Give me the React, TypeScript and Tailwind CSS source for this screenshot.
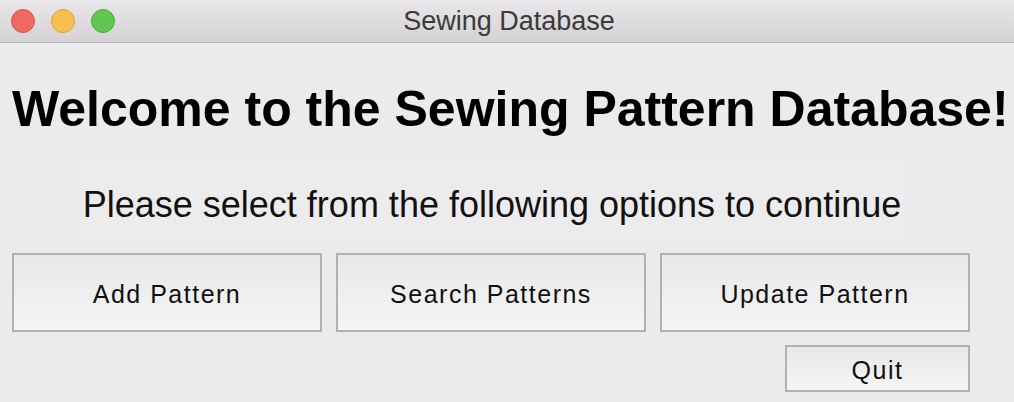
export default function App() {
  const btn =
    'flex items-center justify-center pt-[5px] border-2 border-[#b1b1b1] bg-gradient-to-b from-[#e8e8e8] to-[#f5f5f5] text-[25px] tracking-[1.5px] text-[#111]'

  return (
    <div className="w-[1014px] h-[402px] bg-[#ebebeb] flex flex-col overflow-hidden font-['Liberation_Sans',Arial,sans-serif]">
      {/* title bar */}
      <div className="relative h-[43px] shrink-0 bg-gradient-to-b from-[#e9e7e9] to-[#d4d2d4] border-b border-[#b9b9b9] flex items-center justify-center">
        <div className="absolute left-[11px] top-[9px] flex gap-[16px]">
          <div className="w-[24px] h-[24px] rounded-full bg-[#ee6a5f] border border-[#d6564c]" />
          <div className="w-[24px] h-[24px] rounded-full bg-[#f5c04f] border border-[#d9a33b]" />
          <div className="w-[24px] h-[24px] rounded-full bg-[#62c554] border border-[#4fa841]" />
        </div>
        <span className="text-[27px] text-[#3a3a3a] pl-[4px]">Sewing Database</span>
      </div>

      {/* body */}
      <div className="flex flex-col px-[12px]">
        <h1 className="mt-[41px] text-[50px] font-bold text-black leading-none text-center whitespace-nowrap">
          Welcome to the Sewing Pattern Database!
        </h1>
        <div className="mt-[26px] ml-[64px] w-[832px] pt-[27px] pb-[22px] flex justify-center bg-[#ececec]">
          <p className="text-[36px] text-[#111] leading-none whitespace-nowrap">
            Please select from the following options to continue
          </p>
        </div>
        <div className="flex gap-[14px] mt-[8px]">
          <button className={`${btn} w-[310px] h-[79px]`}>Add Pattern</button>
          <button className={`${btn} w-[310px] h-[79px]`}>Search Patterns</button>
          <button className={`${btn} w-[310px] h-[79px]`}>Update Pattern</button>
        </div>
        <div className="flex justify-end pr-[32px] mt-[13px]">
          <button className={`${btn} w-[185px] h-[47px]`}>Quit</button>
        </div>
      </div>
    </div>
  )
}
